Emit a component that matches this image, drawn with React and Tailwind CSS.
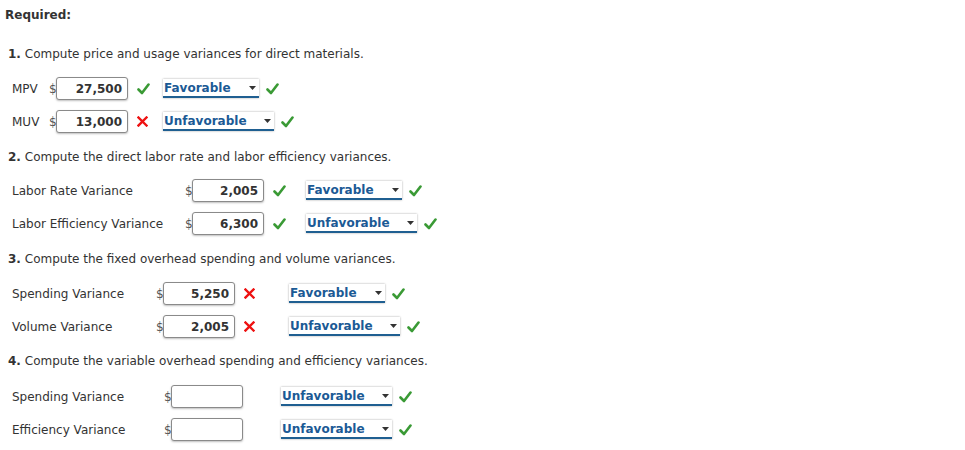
const font = { fontFamily: '"DejaVu Sans", Verdana, sans-serif' };

function Check({ className = "" }) {
  return (
    <svg width="13" height="12" viewBox="0 0 13 12" className={className}>
      <path d="M1.5 6.5 L5 10 L11.5 1.5" fill="none" stroke="#3a9a35" strokeWidth="2.6" strokeLinecap="round" strokeLinejoin="round" />
    </svg>
  );
}

function Cross({ className = "" }) {
  return (
    <svg width="11" height="11" viewBox="0 0 11 11" className={className}>
      <path d="M1.5 1.5 L9.5 9.5 M9.5 1.5 L1.5 9.5" fill="none" stroke="#ee1111" strokeWidth="2.4" strokeLinecap="square" />
    </svg>
  );
}

function Amount({ value }) {
  return (
    <div className="flex items-center">
      <span className="w-[7px] text-[12px] text-[#555]">$</span>
      <div className="w-[72px] h-[23px] rounded-[3px] border border-[#8a8a8a] shadow-[0_1px_2px_rgba(0,0,0,0.25)] bg-white flex items-center justify-end pr-[5px] text-[12px] font-bold text-[#333]">
        {value}
      </div>
    </div>
  );
}

function Pick({ value }) {
  const w = value === "Favorable" ? "w-[96px]" : "w-[111px]";
  return (
    <div className={`${w} h-[19px] flex items-center justify-between bg-white border-b-2 border-[#1f5f91] shadow-[0_0_2px_rgba(0,0,0,0.35)] pl-[1px] pr-[3px]`}>
      <span className="text-[12px] font-bold text-[#1b5a95] leading-none">{value}</span>
      <svg width="7" height="4" viewBox="0 0 7 4"><path d="M0 0 H7 L3.5 4 Z" fill="#333" /></svg>
    </div>
  );
}

function Row({ label, labelW, value, mark, markW, markPl, pick }) {
  return (
    <div className="h-[33px] flex items-center pl-[12px]">
      <div className="text-[12px] text-[#333]" style={{ width: labelW }}>{label}</div>
      <Amount value={value} />
      <div className="flex items-center" style={{ width: markW, paddingLeft: markPl }}>
        {mark === "ok" && <Check />}
        {mark === "bad" && <Cross />}
      </div>
      <Pick value={pick} />
      <Check className="ml-[7px]" />
    </div>
  );
}

function Heading({ n, text, mt }) {
  return (
    <div className="h-[20px] flex items-center pl-[8px] text-[12px] text-[#333]" style={{ marginTop: mt }}>
      <span className="font-bold">{n}.</span>&nbsp;{text}
    </div>
  );
}

export default function App() {
  return (
    <div className="w-[965px] h-[450px] bg-white overflow-hidden pt-[1px]" style={font}>
      <div className="h-[28px] flex items-center pl-[5px] text-[12px] font-bold text-[#333]">Required:</div>

      <Heading n="1" text="Compute price and usage variances for direct materials." mt={15} />
      <div className="mt-[8px]">
        <Row label="MPV" labelW={37} value="27,500" mark="ok" markW={35} markPl={9} pick="Favorable" />
        <Row label="MUV" labelW={37} value="13,000" mark="bad" markW={35} markPl={9} pick="Unfavorable" />
      </div>

      <Heading n="2" text="Compute the direct labor rate and labor efficiency variances." mt={9} />
      <div className="mt-[7px]">
        <Row label="Labor Rate Variance" labelW={173} value="2,005" mark="ok" markW={42} markPl={9} pick="Favorable" />
        <Row label="Labor Efficiency Variance" labelW={173} value="6,300" mark="ok" markW={42} markPl={9} pick="Unfavorable" />
      </div>

      <Heading n="3" text="Compute the fixed overhead spending and volume variances." mt={9} />
      <div className="mt-[8px]">
        <Row label="Spending Variance" labelW={144} value="5,250" mark="bad" markW={54} markPl={9} pick="Favorable" />
        <Row label="Volume Variance" labelW={144} value="2,005" mark="bad" markW={54} markPl={9} pick="Unfavorable" />
      </div>

      <Heading n="4" text="Compute the variable overhead spending and efficiency variances." mt={8} />
      <div className="mt-[9px]">
        <Row label="Spending Variance" labelW={152} value="" mark="" markW={38} markPl={0} pick="Unfavorable" />
        <Row label="Efficiency Variance" labelW={152} value="" mark="" markW={38} markPl={0} pick="Unfavorable" />
      </div>
    </div>
  );
}
